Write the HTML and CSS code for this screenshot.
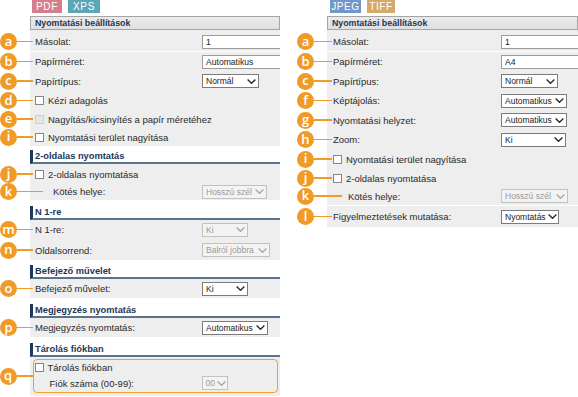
FILE: index.html
```html
<!DOCTYPE html>
<html lang="hu">
<head>
<meta charset="utf-8">
<title>Nyomtatási beállítások</title>
<link rel="stylesheet" href="styles.css">
</head>
<body>
<div class="page">
  <div class="panel pl">
    <div class="tabs"><span class="tab pdf">PDF</span><span class="tab xps">XPS</span></div>
    <div class="hdr">Nyomtatási beállítások</div>
    <div class="sec s1">
      <div class="row h19"><span class="co"><b>a</b></span><span class="lbl">Másolat:</span><span class="inp">1</span></div>
      <div class="sep"></div>
      <div class="row h19"><span class="co"><b>b</b></span><span class="lbl">Papírméret:</span><span class="inp">Automatikus</span></div>
      <div class="row h20"><span class="co"><b>c</b></span><span class="lbl">Papírtípus:</span><span class="sel w57">Normál<svg class="chev" viewBox="0 0 9 5"><path d="M0.6 0.6 L4.5 4.3 L8.4 0.6"/></svg></span></div>
      <div class="row h19"><span class="co"><b>d</b></span><span class="cb"></span><span>Kézi adagolás</span></div>
      <div class="row h18"><span class="co"><b>e</b></span><span class="cb off"></span><span>Nagyítás/kicsinyítés a papír méretéhez</span></div>
      <div class="row h18"><span class="co"><b>i</b></span><span class="cb"></span><span>Nyomtatási terület nagyítása</span></div>
    </div>
    <div class="sh">2-oldalas nyomtatás</div>
    <div class="sec s2">
      <div class="row h18"><span class="co"><b>j</b></span><span class="cb"></span><span>2-oldalas nyomtatása</span></div>
      <div class="row h17"><span class="co long"><b>k</b></span><span class="lbl ind">Kötés helye:</span><span class="sel dis w65">Hosszú szél<svg class="chev" viewBox="0 0 9 5"><path d="M0.6 0.6 L4.5 4.3 L8.4 0.6"/></svg></span></div>
    </div>
    <div class="sh sh7">N 1-re</div>
    <div class="sec">
      <div class="row h19"><span class="co"><b>m</b></span><span class="lbl">N 1-re:</span><span class="sel dis w46">Ki<svg class="chev" viewBox="0 0 9 5"><path d="M0.6 0.6 L4.5 4.3 L8.4 0.6"/></svg></span></div>
      <div class="row h20 mt1"><span class="co"><b>n</b></span><span class="lbl">Oldalsorrend:</span><span class="sel dis w68">Balról jobbra<svg class="chev" viewBox="0 0 9 5"><path d="M0.6 0.6 L4.5 4.3 L8.4 0.6"/></svg></span></div>
    </div>
    <div class="sh sh5">Befejező művelet</div>
    <div class="sec">
      <div class="row h19"><span class="co"><b>o</b></span><span class="lbl">Befejező művelet:</span><span class="sel w46">Ki<svg class="chev" viewBox="0 0 9 5"><path d="M0.6 0.6 L4.5 4.3 L8.4 0.6"/></svg></span></div>
    </div>
    <div class="sh">Megjegyzés nyomtatás</div>
    <div class="sec">
      <div class="row h19"><span class="co"><b>p</b></span><span class="lbl">Megjegyzés nyomtatás:</span><span class="sel w66">Automatikus<svg class="chev" viewBox="0 0 9 5"><path d="M0.6 0.6 L4.5 4.3 L8.4 0.6"/></svg></span></div>
    </div>
    <div class="sh">Tárolás fiókban</div>
    <div class="sec s6">
      <div class="grp">
        <span class="co grpco"><b>q</b></span>
        <div class="row h14"><span class="cb"></span><span>Tárolás fiókban</span></div>
        <div class="row h18"><span class="lbl fiok">Fiók száma (00-99):</span><span class="sel dis w26">00<svg class="chev" viewBox="0 0 9 5"><path d="M0.6 0.6 L4.5 4.3 L8.4 0.6"/></svg></span></div>
      </div>
    </div>
  </div>

  <div class="panel pr">
    <div class="tabs"><span class="tab jpeg">JPEG</span><span class="tab tiff">TIFF</span></div>
    <div class="hdr">Nyomtatási beállítások</div>
    <div class="sec s1">
      <div class="row h19"><span class="co"><b>a</b></span><span class="lbl">Másolat:</span><span class="inp">1</span></div>
      <div class="sep"></div>
      <div class="row h19"><span class="co"><b>b</b></span><span class="lbl">Papírméret:</span><span class="inp">A4</span></div>
      <div class="row h20"><span class="co"><b>c</b></span><span class="lbl">Papírtípus:</span><span class="sel w57">Normál<svg class="chev" viewBox="0 0 9 5"><path d="M0.6 0.6 L4.5 4.3 L8.4 0.6"/></svg></span></div>
      <div class="row h19"><span class="co"><b>f</b></span><span class="lbl">Képtájolás:</span><span class="sel w66">Automatikus<svg class="chev" viewBox="0 0 9 5"><path d="M0.6 0.6 L4.5 4.3 L8.4 0.6"/></svg></span></div>
      <div class="row h20"><span class="co"><b>g</b></span><span class="lbl">Nyomtatási helyzet:</span><span class="sel w66">Automatikus<svg class="chev" viewBox="0 0 9 5"><path d="M0.6 0.6 L4.5 4.3 L8.4 0.6"/></svg></span></div>
      <div class="row h19"><span class="co"><b>h</b></span><span class="lbl">Zoom:</span><span class="sel w65">Ki<svg class="chev" viewBox="0 0 9 5"><path d="M0.6 0.6 L4.5 4.3 L8.4 0.6"/></svg></span></div>
      <div class="row h20"><span class="co"><b>i</b></span><span class="cb"></span><span>Nyomtatási terület nagyítása</span></div>
      <div class="row h18"><span class="co"><b>j</b></span><span class="cb"></span><span>2-oldalas nyomtatása</span></div>
      <div class="row h18"><span class="co long"><b>k</b></span><span class="lbl ind">Kötés helye:</span><span class="sel dis w67">Hosszú szél<svg class="chev" viewBox="0 0 9 5"><path d="M0.6 0.6 L4.5 4.3 L8.4 0.6"/></svg></span></div>
      <div class="sep"></div>
      <div class="row h21"><span class="co"><b>l</b></span><span class="lbl">Figyelmeztetések mutatása:</span><span class="sel w58">Nyomtatás<svg class="chev" viewBox="0 0 9 5"><path d="M0.6 0.6 L4.5 4.3 L8.4 0.6"/></svg></span></div>
    </div>
  </div>
</div>
</body>
</html>
```

FILE: styles.css
```css
html, body {
  margin: 0;
  padding: 0;
  background: #ffffff;
}

body {
  font-family: "Liberation Sans", Arial, sans-serif;
  color: #333333;
}

.page {
  display: flex;
  width: 578px;
  height: 397px;
  overflow: hidden;
}

.panel {
  position: relative;
  box-sizing: border-box;
  padding-left: 30px;
  flex: none;
}

.pl { width: 280px; }
.pr { width: 281px; margin-left: 17px; }

/* format tabs */
.tabs {
  display: flex;
  gap: 6px;
  height: 13px;
  margin-left: 2px;
}
.pr .tabs { margin-left: 3px; }

.tab {
  display: block;
  height: 13px;
  color: #ffffff;
  font-size: 10px;
  line-height: 13px;
  letter-spacing: 0.6px;
  text-align: center;
}
.pdf { width: 30px; background: #d67f8b; }
.xps { width: 32px; background: #5ca7b6; }
.jpeg { width: 31px; background: #6f98ca; }
.tiff { width: 28px; background: #d5aa68; }

/* main header box */
.hdr {
  margin-top: 3px;
  height: 14px;
  box-sizing: border-box;
  border: 1px solid #a5a5a5;
  background: linear-gradient(#ebebeb, #e0e0e0);
  padding-left: 4px;
  font-size: 8.8px;
  font-weight: bold;
  line-height: 12px;
  color: #1f3654;
}

/* gray sections */
.sec { background: #eeeeee; }
.s1 { padding-top: 2px; }
.s2 { padding-top: 1px; }
.s6 { padding-top: 2px; padding-bottom: 3px; }

.sep { height: 1px; background: #ffffff; }

/* section headings */
.sh {
  height: 12px;
  border-left: 3px solid #1c3a5d;
  border-bottom: 2px solid #5b748e;
  padding-left: 2px;
  font-size: 9.3px;
  font-weight: bold;
  line-height: 12px;
  color: #1d3658;
}
.sec + .sh { margin-top: 6px; }
.s1 + .sh { margin-top: 4px; }
.sec + .sh5 { margin-top: 5px; }

/* rows */
.row {
  position: relative;
  display: flex;
  align-items: center;
  padding-left: 5px;
  font-size: 9.5px;
  color: #2a2a2a;
}
.pr .row { padding-left: 6px; }

.h14 { height: 14px; }
.h17 { height: 17px; }
.h18 { height: 18px; }
.h19 { height: 19px; }
.h20 { height: 20px; }
.h21 { height: 21px; }
.mt1 { margin-top: 1px; }

.lbl { width: 167px; flex: none; }
.pr .lbl { width: 168px; }
.lbl.ind { padding-left: 18px; width: 149px; }
.pr .lbl.ind { padding-left: 15px; width: 153px; }

/* text input */
.inp {
  flex: 1;
  height: 14px;
  box-sizing: border-box;
  border: 1px solid #9c9c9c;
  border-right: none;
  background: #ffffff;
  padding-left: 3px;
  font-size: 8.6px;
  line-height: 12px;
  color: #222222;
}

/* select */
.sel {
  display: flex;
  align-items: center;
  justify-content: space-between;
  flex: none;
  height: 14px;
  box-sizing: border-box;
  border: 1px solid #7b7b7b;
  background: #ffffff;
  padding: 0 2px 0 3px;
  font-size: 8.5px;
  color: #222222;
  white-space: nowrap;
  overflow: hidden;
}
.sel.dis {
  border-color: #c2c2c2;
  background: #f3f3f3;
  color: #9a9a9a;
}
.chev {
  width: 9px;
  height: 5px;
  flex: none;
  margin-left: 2px;
  fill: none;
  stroke: #2a2a2a;
  stroke-width: 1.4;
}
.sel.dis .chev { stroke: #a8a8a8; }

.w26 { width: 26px; }
.w46 { width: 46px; }
.w57 { width: 57px; }
.w58 { width: 58px; }
.w65 { width: 65px; }
.w66 { width: 66px; }
.w67 { width: 67px; }
.w68 { width: 68px; }

/* checkbox */
.cb {
  width: 9px;
  height: 9px;
  box-sizing: border-box;
  border: 1px solid #868686;
  background: #ffffff;
  margin-right: 4px;
  flex: none;
}
.cb.off {
  border-color: #d0d0d0;
  background: #e6e6e6;
}

/* callouts */
.co {
  position: absolute;
  left: -30px;
  top: 50%;
  margin-top: -8.5px;
  height: 17px;
  width: 33px;
  display: flex;
  align-items: center;
}
.pr .co { width: 35px; }
.co.long { width: 43px; }
.pr .co.long { width: 45px; }
.co b {
  display: flex;
  align-items: center;
  justify-content: center;
  flex: none;
  width: 17px;
  height: 17px;
  border-radius: 50%;
  background: #f09b27;
  color: #ffffff;
  font-family: "Open Sans", "DejaVu Sans", sans-serif;
  font-weight: 600;
  font-size: 13px;
  line-height: 1;
  padding-bottom: 1px;
  box-sizing: border-box;
}
.co::after {
  content: "";
  flex: 1;
  height: 1.5px;
  background: #f09b27;
}

/* orange group */
.grp {
  position: relative;
  margin: 0 2px 0 3px;
  border: 1.5px solid #f0a030;
  border-radius: 4px;
}
.grp .row { padding-left: 0.5px; }
.grp .lbl { width: 167px; }
.lbl.fiok { padding-left: 15px; width: 152px; }
.co.grpco {
  left: -34.5px;
  width: 34.5px;
}
```
